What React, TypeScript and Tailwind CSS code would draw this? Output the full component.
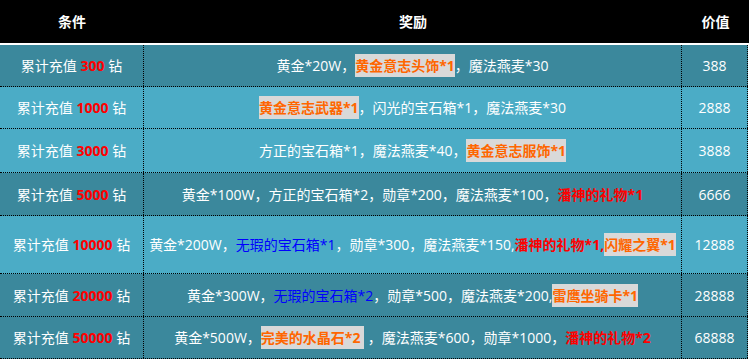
import React from "react";

const DARK = "bg-[#3b889c]";
const LIGHT = "bg-[#4bacc6]";

type Seg = { t: string; k?: "hl" | "red" | "blue" };

const Hl = ({ children }: { children: React.ReactNode }) => (
  <span className="inline-block bg-[#d9d9d9] font-bold text-[#ff6600] leading-[23px] whitespace-pre">{children}</span>
);

function renderSegs(segs: Seg[]) {
  return segs.map((s, i) => {
    if (s.k === "hl") return <Hl key={i}>{s.t}</Hl>;
    if (s.k === "red") return <span key={i} className="font-bold text-[#ff0000]">{s.t}</span>;
    if (s.k === "blue") return <span key={i} className="text-[#0000ff]">{s.t}</span>;
    return <span key={i}>{s.t}</span>;
  });
}

const rows: { n: string; h: string; bg: string; segs: Seg[]; v: string }[] = [
  { n: "300", h: "h-[42px]", bg: DARK, v: "388", segs: [{ t: "黄金*20W，" }, { t: "黄金意志头饰*1", k: "hl" }, { t: "，魔法燕麦*30" }] },
  { n: "1000", h: "h-[42px]", bg: LIGHT, v: "2888", segs: [{ t: "黄金意志武器*1", k: "hl" }, { t: "，闪光的宝石箱*1，魔法燕麦*30" }] },
  { n: "3000", h: "h-[44px]", bg: LIGHT, v: "3888", segs: [{ t: "方正的宝石箱*1，魔法燕麦*40，" }, { t: "黄金意志服饰*1", k: "hl" }] },
  { n: "5000", h: "h-[43px]", bg: DARK, v: "6666", segs: [{ t: "黄金*100W，方正的宝石箱*2，勋章*200，魔法燕麦*100，" }, { t: "潘神的礼物*1", k: "red" }] },
  { n: "10000", h: "h-[58px]", bg: LIGHT, v: "12888", segs: [{ t: "黄金*200W，" }, { t: "无瑕的宝石箱*1", k: "blue" }, { t: "，勋章*300，魔法燕麦*150," }, { t: "潘神的礼物*1,", k: "red" }, { t: "闪耀之翼*1", k: "hl" }] },
  { n: "20000", h: "h-[43px]", bg: DARK, v: "28888", segs: [{ t: "黄金*300W，" }, { t: "无瑕的宝石箱*2", k: "blue" }, { t: "，勋章*500，魔法燕麦*200," }, { t: "雷鹰坐骑卡*1", k: "hl" }] },
  { n: "50000", h: "h-[42px]", bg: DARK, v: "68888", segs: [{ t: "黄金*500W，" }, { t: "完美的水晶石*2 ", k: "hl" }, { t: " ，魔法燕麦*600，勋章*1000，" }, { t: "潘神的礼物*2", k: "red" }] },
];

export default function App() {
  return (
    <div
      className="w-[749px] h-[359px] bg-white text-[14px] text-white overflow-hidden"
      style={{ fontFamily: '"Open Sans", "Noto Sans CJK SC", sans-serif' }}
    >
      <div className="flex h-[43px] w-full bg-black font-bold items-center">
        <div className="w-[144px] text-center">条件</div>
        <div className="flex-1 text-center">奖励</div>
        <div className="w-[67px] text-center">价值</div>
      </div>
      <div className="w-[748px] h-[2px] bg-white" />
      <div className="w-[748px]">
        {rows.map((r, i) => (
          <div key={i} className={`flex ${r.h} ${r.bg} border-b border-dotted border-black`}>
            <div className="w-[144px] flex items-center justify-center border-r border-dotted border-black whitespace-pre">
              <span>累计充值 </span>
              <span className="font-bold text-[#ff0000]">{r.n}</span>
              <span> 钻</span>
            </div>
            <div className="flex-1 flex items-center justify-center border-r border-dotted border-black whitespace-pre">
              {renderSegs(r.segs)}
            </div>
            <div className="w-[66px] flex items-center justify-center border-r border-dotted border-black">{r.v}</div>
          </div>
        ))}
      </div>
    </div>
  );
}
